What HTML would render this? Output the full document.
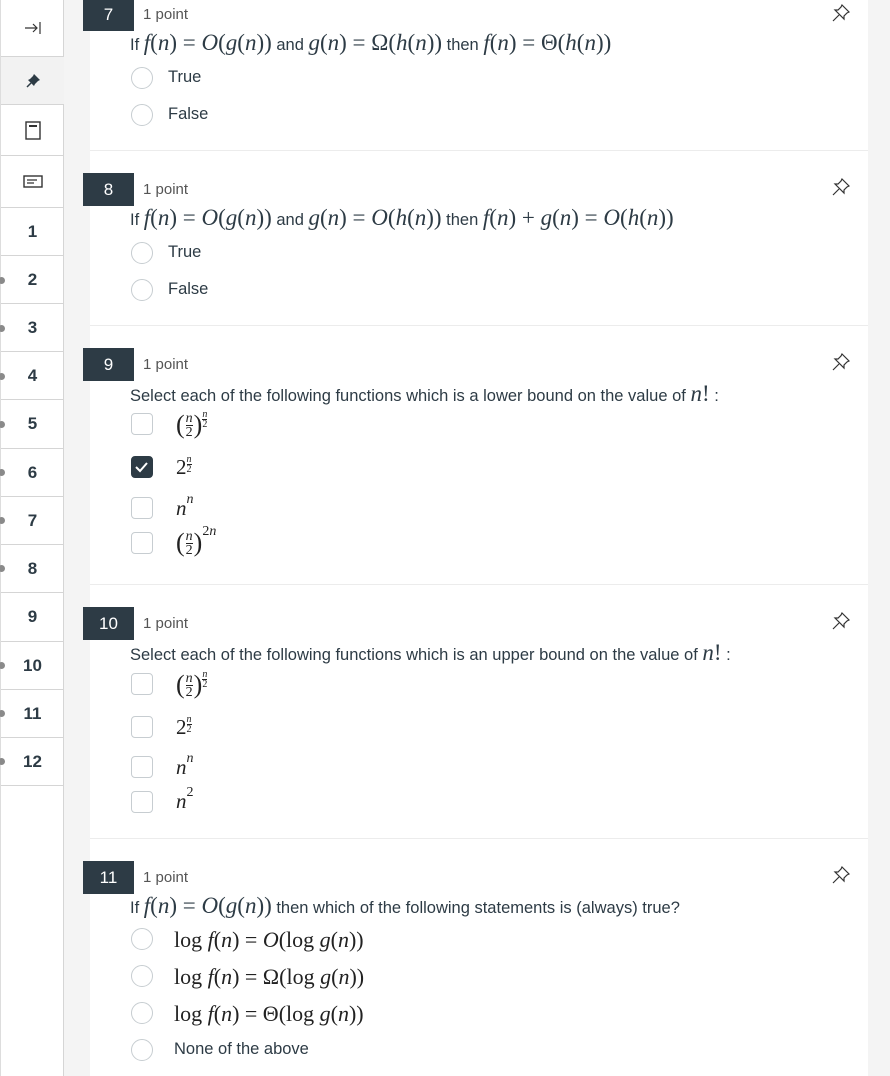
<!DOCTYPE html>
<html><head><meta charset="utf-8"><style>
*{margin:0;padding:0;box-sizing:border-box}
body{width:890px;height:1076px;background:#f4f4f4;position:relative;overflow:hidden;font-family:"Liberation Sans",sans-serif;color:#2d3b45}
.side{position:absolute;left:0;top:0;width:64px;height:1076px;background:#fff;border-right:1px solid #d5d5d5;border-left:1px solid #ddd}
.cell{position:absolute;left:0;width:63px;border-bottom:1px solid #d5d5d5;display:flex;align-items:center;justify-content:center;font-size:17px;font-weight:bold;color:#2d3b45}
.dot{position:absolute;left:-3px;width:7px;height:7px;border-radius:50%;background:#8a8a8a}
.panel{position:absolute;left:90px;top:0;width:778px;height:1076px;background:#fff}
.sep{position:absolute;left:90px;width:778px;height:1px;background:#ececec}
.badge{position:absolute;left:83px;width:51px;height:33px;background:#2d3b45;color:#fff;font-size:17px;display:flex;align-items:center;justify-content:center}
.pt{position:absolute;left:143px;font-size:15px;color:#555}
.q{position:absolute;left:130px;font-size:16.5px;color:#2d3b45;white-space:nowrap}
.m{font-family:"Liberation Serif",serif;font-size:23px}
.i{font-style:italic}
.r{position:absolute;left:131px;width:22px;height:22px;border-radius:50%;border:1.5px solid #c7cdd1;background:#fff}
.c{position:absolute;left:131px;width:22px;height:22px;border-radius:4px;border:1.5px solid #c7cdd1;background:#fff}
.c.on{background:#2d3b45;border-color:#2d3b45}
.l{position:absolute;left:168px;font-size:16.5px;color:#2d3b45;white-space:nowrap}
.lm{position:absolute;left:176px;font-family:"Liberation Serif",serif;font-size:21px;white-space:nowrap;color:#222}
.pin{position:absolute;left:832px}
.fr{display:inline-flex;flex-direction:column;font-size:14px;line-height:13px;vertical-align:middle;text-align:center;margin:0 1px}
.fr span:first-child{border-bottom:1px solid #222}
.big{font-size:26px;vertical-align:middle}
sup{font-size:14px;vertical-align:top;position:relative;top:-4px}
.sfr{display:inline-flex;flex-direction:column;font-size:10px;line-height:9px;text-align:center}
.sfr span:first-child{border-bottom:1px solid #222}
</style></head><body>
<div class="side">
<div class="cell" style="top:0;height:57px;font-weight:normal;font-size:15px">
<svg width="18" height="14" viewBox="0 0 18 14"><path d="M1 7H13M9 3L13 7L9 11M16 1V13" stroke="#333" stroke-width="1.2" fill="none"/></svg></div>
<div class="cell" style="top:57px;height:48px;background:#f2f2f2">
<svg width="16" height="16" viewBox="0 0 16 16"><path d="M9 1L15 7L13 8L10 11L9 13L3 7L5 6L8 3Z" fill="#2d3b45"/><path d="M6 10L2 14" stroke="#2d3b45" stroke-width="1.5"/></svg></div>
<div class="cell" style="top:105px;height:51px">
<svg width="16" height="19" viewBox="0 0 16 19"><rect x="1" y="1" width="14" height="17" fill="none" stroke="#333" stroke-width="1.4"/><rect x="4" y="4" width="8" height="2" fill="#333"/></svg></div>
<div class="cell" style="top:156px;height:52px">
<svg width="20" height="13" viewBox="0 0 20 13"><rect x="1" y="1" width="18" height="11" fill="none" stroke="#333" stroke-width="1.4"/><path d="M4 5H14M4 8H11" stroke="#333" stroke-width="1.2"/></svg></div>
<div class="cell" style="top:208px;height:48px">1</div>
<div class="cell" style="top:256px;height:48px">2</div>
<div class="cell" style="top:304px;height:48px">3</div>
<div class="cell" style="top:352px;height:48px">4</div>
<div class="cell" style="top:400px;height:49px">5</div>
<div class="cell" style="top:449px;height:48px">6</div>
<div class="cell" style="top:497px;height:48px">7</div>
<div class="cell" style="top:545px;height:48px">8</div>
<div class="cell" style="top:593px;height:49px">9</div>
<div class="cell" style="top:642px;height:48px">10</div>
<div class="cell" style="top:690px;height:48px">11</div>
<div class="cell" style="top:738px;height:48px">12</div>
<div class="dot" style="top:277px"></div><div class="dot" style="top:325px"></div><div class="dot" style="top:373px"></div><div class="dot" style="top:421px"></div><div class="dot" style="top:469px"></div><div class="dot" style="top:517px"></div><div class="dot" style="top:565px"></div><div class="dot" style="top:662px"></div><div class="dot" style="top:710px"></div><div class="dot" style="top:758px"></div>
</div>
<div class="panel"></div>
<div class="sep" style="top:150px"></div><div class="sep" style="top:325px"></div><div class="sep" style="top:584px"></div><div class="sep" style="top:838px"></div>

<!-- Q7 -->
<div class="badge" style="top:-2px">7</div><div class="pt" style="top:6px">1 point</div>
<div class="q" style="top:30px">If <span class="m"><span class="i">f</span>(<span class="i">n</span>) = <span class="i">O</span>(<span class="i">g</span>(<span class="i">n</span>))</span> and <span class="m"><span class="i">g</span>(<span class="i">n</span>) = Ω(<span class="i">h</span>(<span class="i">n</span>))</span> then <span class="m"><span class="i">f</span>(<span class="i">n</span>) = Θ(<span class="i">h</span>(<span class="i">n</span>))</span></div>
<div class="r" style="top:67px"></div><div class="l" style="top:68px">True</div>
<div class="r" style="top:104px"></div><div class="l" style="top:105px">False</div>

<!-- Q8 -->
<div class="badge" style="top:173px">8</div><div class="pt" style="top:181px">1 point</div>
<div class="q" style="top:205px">If <span class="m"><span class="i">f</span>(<span class="i">n</span>) = <span class="i">O</span>(<span class="i">g</span>(<span class="i">n</span>))</span> and <span class="m"><span class="i">g</span>(<span class="i">n</span>) = <span class="i">O</span>(<span class="i">h</span>(<span class="i">n</span>))</span> then <span class="m"><span class="i">f</span>(<span class="i">n</span>) + <span class="i">g</span>(<span class="i">n</span>) = <span class="i">O</span>(<span class="i">h</span>(<span class="i">n</span>))</span></div>
<div class="r" style="top:242px"></div><div class="l" style="top:243px">True</div>
<div class="r" style="top:279px"></div><div class="l" style="top:280px">False</div>

<!-- Q9 -->
<div class="badge" style="top:348px">9</div><div class="pt" style="top:356px">1 point</div>
<div class="q" style="top:381px">Select each of the following functions which is a lower bound on the value of <span class="m"><span class="i">n</span>!</span> :</div>
<div class="c" style="top:413px"></div><div class="lm" style="top:410px"><span class="big">(</span><span class="fr i"><span>n</span><span style="font-style:normal">2</span></span><span class="big">)</span><sup><span class="sfr i"><span>n</span><span style="font-style:normal">2</span></span></sup></div>
<div class="c on" style="top:456px"><svg width="19" height="19" viewBox="0 0 19 19"><path d="M4 10L8 14L15 6" stroke="#fff" stroke-width="2" fill="none"/></svg></div><div class="lm" style="top:455px">2<sup><span class="sfr i"><span>n</span><span style="font-style:normal">2</span></span></sup></div>
<div class="c" style="top:497px"></div><div class="lm i" style="top:496px">n<sup>n</sup></div>
<div class="c" style="top:532px"></div><div class="lm" style="top:528px"><span class="big">(</span><span class="fr i"><span>n</span><span style="font-style:normal">2</span></span><span class="big">)</span><sup>2<span class="i">n</span></sup></div>

<!-- Q10 -->
<div class="badge" style="top:607px">10</div><div class="pt" style="top:615px">1 point</div>
<div class="q" style="top:640px">Select each of the following functions which is an upper bound on the value of <span class="m"><span class="i">n</span>!</span> :</div>
<div class="c" style="top:673px"></div><div class="lm" style="top:670px"><span class="big">(</span><span class="fr i"><span>n</span><span style="font-style:normal">2</span></span><span class="big">)</span><sup><span class="sfr i"><span>n</span><span style="font-style:normal">2</span></span></sup></div>
<div class="c" style="top:716px"></div><div class="lm" style="top:715px">2<sup><span class="sfr i"><span>n</span><span style="font-style:normal">2</span></span></sup></div>
<div class="c" style="top:756px"></div><div class="lm i" style="top:755px">n<sup>n</sup></div>
<div class="c" style="top:791px"></div><div class="lm" style="top:789px"><span class="i">n</span><sup>2</sup></div>

<!-- Q11 -->
<div class="badge" style="top:861px">11</div><div class="pt" style="top:869px">1 point</div>
<div class="q" style="top:893px">If <span class="m"><span class="i">f</span>(<span class="i">n</span>) = <span class="i">O</span>(<span class="i">g</span>(<span class="i">n</span>))</span> then which of the following statements is (always) true?</div>
<div class="r" style="top:928px"></div><div class="lm" style="left:174px;top:927px;font-size:22px">log <span class="i">f</span>(<span class="i">n</span>) = <span class="i">O</span>(log <span class="i">g</span>(<span class="i">n</span>))</div>
<div class="r" style="top:965px"></div><div class="lm" style="left:174px;top:964px;font-size:22px">log <span class="i">f</span>(<span class="i">n</span>) = Ω(log <span class="i">g</span>(<span class="i">n</span>))</div>
<div class="r" style="top:1002px"></div><div class="lm" style="left:174px;top:1001px;font-size:22px">log <span class="i">f</span>(<span class="i">n</span>) = Θ(log <span class="i">g</span>(<span class="i">n</span>))</div>
<div class="r" style="top:1039px"></div><div class="l" style="left:174px;top:1040px">None of the above</div>

<svg class="pin" style="top:4px" width="18" height="18" viewBox="0 0 18 18"><path d="M10 1L17 8L15 9L12 12L12 15L3 6L6 6L9 3Z M7 11L1 17" stroke="#333" stroke-width="1.2" fill="none"/></svg>
<svg class="pin" style="top:178px" width="18" height="18" viewBox="0 0 18 18"><path d="M10 1L17 8L15 9L12 12L12 15L3 6L6 6L9 3Z M7 11L1 17" stroke="#333" stroke-width="1.2" fill="none"/></svg>
<svg class="pin" style="top:353px" width="18" height="18" viewBox="0 0 18 18"><path d="M10 1L17 8L15 9L12 12L12 15L3 6L6 6L9 3Z M7 11L1 17" stroke="#333" stroke-width="1.2" fill="none"/></svg>
<svg class="pin" style="top:612px" width="18" height="18" viewBox="0 0 18 18"><path d="M10 1L17 8L15 9L12 12L12 15L3 6L6 6L9 3Z M7 11L1 17" stroke="#333" stroke-width="1.2" fill="none"/></svg>
<svg class="pin" style="top:866px" width="18" height="18" viewBox="0 0 18 18"><path d="M10 1L17 8L15 9L12 12L12 15L3 6L6 6L9 3Z M7 11L1 17" stroke="#333" stroke-width="1.2" fill="none"/></svg>
</body></html>
